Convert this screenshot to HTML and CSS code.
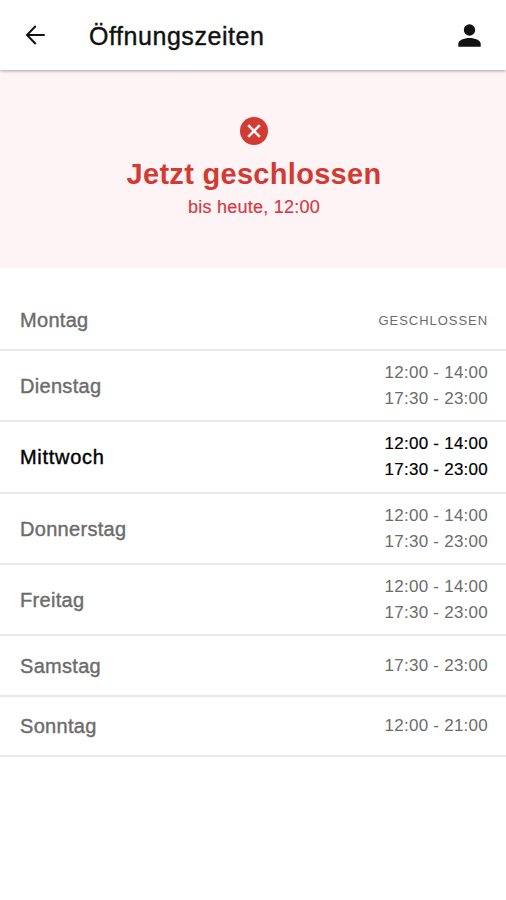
FILE: index.html
```html
<!DOCTYPE html>
<html lang="de">
<head>
  <meta charset="UTF-8" />
  <meta name="viewport" content="width=device-width, initial-scale=1.0" />
  <title>Öffnungszeiten</title>
  <link rel="stylesheet" href="styles.css">
</head>
<body>
  <header class="topbar">
    <svg class="back" viewBox="0 0 20 20" width="20" height="20">
      <path d="M19.7 10H2M10.7 1L2 10L10.7 19" fill="none" stroke="#111" stroke-width="2" />
    </svg>
    <h1>Öffnungszeiten</h1>
    <svg class="user" viewBox="0 0 23 23" width="23" height="23">
      <circle cx="11.5" cy="6" r="5.7" fill="#111" />
      <path d="M.3 22.7V20C.3 16.3 6 14.1 11.5 14.1S22.7 16.3 22.7 20V22.7Z" fill="#111" />
    </svg>
  </header>

  <section class="status">
    <svg viewBox="0 0 28 28" width="28" height="28">
      <circle cx="14" cy="14" r="14" fill="#d23b33" />
      <path d="M8.2 8.2L19.8 19.8M19.8 8.2L8.2 19.8" stroke="#fff4f5" stroke-width="2.6" />
    </svg>
    <h2>Jetzt geschlossen</h2>
    <p>bis heute, 12:00</p>
  </section>

  <ul class="days">
    <li class="single">
      <span class="day">Montag</span>
      <span class="closed">GESCHLOSSEN</span>
    </li>
    <li>
      <span class="day">Dienstag</span>
      <span class="hours">12:00 - 14:00<br>17:30 - 23:00</span>
    </li>
    <li class="today">
      <span class="day">Mittwoch</span>
      <span class="hours">12:00 - 14:00<br>17:30 - 23:00</span>
    </li>
    <li>
      <span class="day">Donnerstag</span>
      <span class="hours">12:00 - 14:00<br>17:30 - 23:00</span>
    </li>
    <li>
      <span class="day">Freitag</span>
      <span class="hours">12:00 - 14:00<br>17:30 - 23:00</span>
    </li>
    <li class="single">
      <span class="day">Samstag</span>
      <span class="hours">17:30 - 23:00</span>
    </li>
    <li class="single">
      <span class="day">Sonntag</span>
      <span class="hours">12:00 - 21:00</span>
    </li>
  </ul>
</body>
</html>
```
FILE: styles.css
```css
* { box-sizing: border-box; margin: 0; padding: 0; }
body { font-family: "Liberation Sans", Arial, sans-serif; background: #fff; color: #111; }

.topbar { position: relative; display: flex; align-items: center; height: 70px; background: #fff; padding: 0 25px; box-shadow: 0 1px 3px rgba(0, 0, 0, 0.35); }
.topbar h1 { flex: 1; margin-left: 44px; padding-top: 2px; font-size: 25px; font-weight: normal; letter-spacing: 0.55px; -webkit-text-stroke: 0.4px; }

.status { display: flex; flex-direction: column; align-items: center; height: 198px; padding: 47px 0 0 2px; background: #fff4f5; color: #d23b33; }
.status h2 { margin-top: 13px; font-size: 29px; line-height: 32px; letter-spacing: 0.3px; }
.status p { margin-top: 7px; font-size: 18px; line-height: 20px; letter-spacing: 0.25px; color: #d23b46; -webkit-text-stroke: 0.2px; }

.days { list-style: none; padding-top: 22.5px; }
.days li { display: flex; justify-content: space-between; align-items: center; height: 71.4px; padding: 1px 18px 0 20px; border-bottom: 2px solid #e9e9e9; color: #6c6c6c; }
.days .single { height: 60.3px; }
.day { padding-top: 1px; font-size: 20px; letter-spacing: 0.3px; -webkit-text-stroke: 0.4px; }
.hours { font-size: 17px; line-height: 26px; letter-spacing: 0.25px; text-align: right; }
.closed { padding-top: 1px; font-size: 13px; letter-spacing: 0.95px; }
.days .today { color: #000; }
.today .day { letter-spacing: 0.7px; }
.today .hours { -webkit-text-stroke: 0.2px; }
```
